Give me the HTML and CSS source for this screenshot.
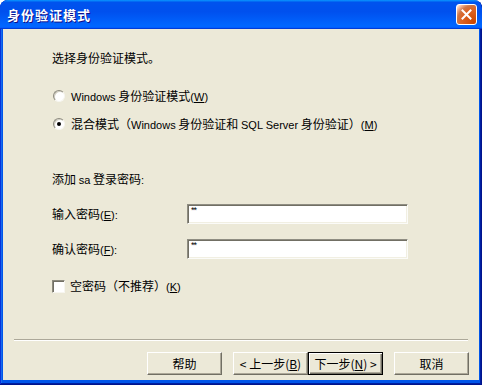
FILE: index.html
```html
<!DOCTYPE html>
<html lang="zh-CN">
<head>
<meta charset="utf-8">
<title>身份验证模式</title>
<link rel="stylesheet" href="styles.css">
</head>
<body>
<div class="window">
  <div class="titlebar">
    <span class="title">身份验证模式</span>
    <span class="close"><svg width="11" height="11" viewBox="0 0 11 11"><path d="M1.5 1.5 L9.5 9.5 M9.5 1.5 L1.5 9.5" stroke="#fff" stroke-width="2" stroke-linecap="square"/></svg></span>
  </div>
  <div class="client">
    <div class="form">
      <div class="intro">选择身份验证模式。</div>
      <div class="option opt1"><span class="radio"></span><span class="label"><span class="en">Windows</span> 身份验证模式<span class="en">(<u>W</u>)</span></span></div>
      <div class="option opt2"><span class="radio checked"></span><span class="label">混合模式（<span class="en">Windows</span> 身份验证和 <span class="en">SQL Server</span> 身份验证）<span class="en">(<u>M</u>)</span></span></div>
      <div class="sa">添加 <span class="en">sa</span> 登录密码<span class="en">:</span></div>
      <div class="field f1"><span class="flabel">输入密码<span class="en">(<u>E</u>):</span></span><span class="input">**</span></div>
      <div class="field f2"><span class="flabel">确认密码<span class="en">(<u>F</u>):</span></span><span class="input">**</span></div>
      <div class="option chk"><span class="checkbox"></span><span class="label">空密码（不推荐）<span class="en">(<u>K</u>)</span></span></div>
    </div>
    <div class="footer">
      <div class="separator"></div>
      <div class="buttons">
        <span class="btn">帮助</span>
        <span class="btn back">&lt; 上一步(<u>B</u>)</span>
        <span class="btn default">下一步(<u>N</u>) &gt;</span>
        <span class="btn cancel">取消</span>
      </div>
    </div>
  </div>
</div>
</body>
</html>
```

FILE: styles.css
```css
html, body {
  margin: 0;
  padding: 0;
  background: #fff;
}

.window {
  width: 482px;
  height: 385px;
  box-sizing: border-box;
  background: #0055ea;
  border-radius: 8px 8px 0 0;
  box-shadow: inset -1px -1px #00138c, inset 1px 0 #0831d9, inset -2px -2px #001ea0, inset 2px 0 #166aee;
  display: flex;
  flex-direction: column;
  overflow: hidden;
  font-family: "Noto Sans CJK SC", "Liberation Sans", sans-serif;
  font-size: 12px;
  color: #000;
}

.titlebar {
  height: 29px;
  flex: none;
  display: flex;
  align-items: center;
  padding-left: 7px;
  padding-right: 5px;
  background: linear-gradient(180deg, #0997ff 0, #0053ee 8%, #0050ee 40%, #0066ff 88%, #0066ff 93%, #005bff 95%, #003dd7 96%, #003dd7 100%);
  border-radius: 8px 8px 0 0;
}

.title {
  color: #fff;
  font-weight: bold;
  font-size: 13px;
  letter-spacing: 1px;
  text-shadow: 1px 1px #0f1089;
  line-height: 16px;
}

.close {
  margin-left: auto;
  width: 21px;
  height: 21px;
  box-sizing: border-box;
  border: 1px solid #fff;
  border-radius: 3px;
  background: radial-gradient(circle at 90% 90%, #cc4600 0%, #dc6527 55%, #cd7546 70%, #ffccb2 90%, #fff 100%);
  display: flex;
  align-items: center;
  justify-content: center;
}

.client {
  margin: 0 3px;
  height: 351px;
  flex: none;
  background: #ece9d8;
  display: flex;
  flex-direction: column;
  box-sizing: border-box;
  padding-bottom: 5px;
}

.form {
  padding-left: 49px;
  display: flex;
  flex-direction: column;
  align-items: flex-start;
}

.en {
  font-family: "Liberation Sans", sans-serif;
  font-size: 11px;
}

u {
  text-decoration: underline;
  text-underline-offset: 1px;
}

.intro {
  margin-top: 21px;
  line-height: 16px;
}

.option {
  display: flex;
  align-items: center;
  height: 16px;
  line-height: 16px;
}

.opt1 { margin-top: 22px; padding-left: 1px; }
.opt2 { margin-top: 12px; padding-left: 1px; }

.radio {
  width: 12px;
  height: 12px;
  box-sizing: border-box;
  border-radius: 50%;
  border: 1px solid;
  border-color: #8c8a7e #f7f6f0 #f7f6f0 #8c8a7e;
  background: #fff;
  box-shadow: inset 1px 1px #d2cfc2;
  margin-right: 6px;
  display: flex;
  align-items: center;
  justify-content: center;
}

.radio.checked::after {
  content: "";
  width: 4px;
  height: 4px;
  border-radius: 50%;
  background: #000;
}

.sa {
  margin-top: 39px;
  line-height: 16px;
}

.field {
  display: flex;
  align-items: center;
  height: 20px;
}

.f1 { margin-top: 16px; }
.f2 { margin-top: 15px; }

.flabel {
  width: 135px;
  line-height: 16px;
}

.input {
  width: 221px;
  height: 20px;
  box-sizing: border-box;
  background: #fff;
  border: 1px solid;
  border-color: #8f8d82 #fbfbf8 #fbfbf8 #8f8d82;
  box-shadow: inset 1px 1px #716f64, inset -1px -1px #f1efe2;
  font-family: "Liberation Sans", sans-serif;
  font-size: 9px;
  line-height: 9px;
  padding: 1px 0 0 3px;
  letter-spacing: -1px;
}

.chk {
  margin-top: 19px;
}

.checkbox {
  width: 13px;
  height: 13px;
  box-sizing: border-box;
  border: 1px solid;
  border-color: #8c8a7e #f7f6f0 #f7f6f0 #8c8a7e;
  box-shadow: inset 1px 1px #716f64;
  background: #fff;
  margin-right: 5px;
}

.footer {
  margin-top: auto;
}

.separator {
  margin: 0 11px;
  border-top: 1px solid #aca899;
  border-bottom: 1px solid #fff;
}

.buttons {
  margin-top: 11px;
  display: flex;
  justify-content: flex-end;
  padding-right: 10px;
}

.btn {
  width: 75px;
  height: 23px;
  box-sizing: border-box;
  background: #ece9d8;
  border: 1px solid;
  border-color: #fff #716f64 #716f64 #fff;
  box-shadow: inset -1px -1px #aca899;
  display: flex;
  align-items: center;
  justify-content: center;
  line-height: 16px;
  white-space: pre;
}

.btn u {
  text-underline-offset: 1px;
}

.back { margin-left: 11px; }

.default {
  border-color: #000;
  box-shadow: inset 1px 1px #fff, inset -1px -1px #716f64, inset -2px -2px #aca899;
}

.cancel { margin-left: 11px; }
```
